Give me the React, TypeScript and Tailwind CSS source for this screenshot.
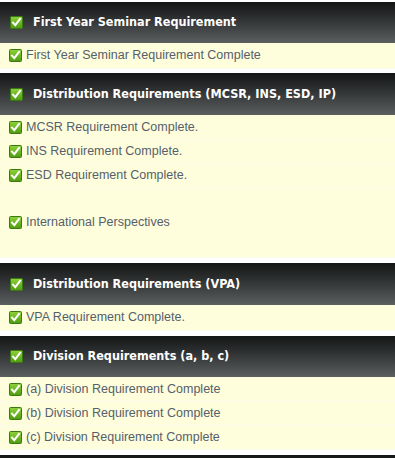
import React from "react";

function Check() {
  return (
    <svg width="13" height="13" viewBox="0 0 13 13" className="shrink-0">
      <defs>
        <linearGradient id="cg" x1="0" y1="0" x2="0" y2="1">
          <stop offset="0" stopColor="#8fd23a" />
          <stop offset="1" stopColor="#4e9a12" />
        </linearGradient>
      </defs>
      <rect x="0.5" y="0.5" width="12" height="12" rx="1" fill="url(#cg)" stroke="#3b7a10" />
      <path d="M3 6.6 L5.3 9.2 L10 3" fill="none" stroke="#fff" strokeWidth="2" strokeLinecap="square" />
    </svg>
  );
}

function Header({ title, h }: { title: string; h: string }) {
  return (
    <div className={`flex items-center bg-gradient-to-b from-[#141616] to-[#5c5f60] pl-[10px] ${h}`}>
      <Check />
      <span
        className="ml-[10px] text-[12.5px] font-bold text-white"
        style={{ fontFamily: '"DejaVu Sans Condensed", "DejaVu Sans", Verdana, sans-serif', fontStretch: "condensed" }}
      >
        {title}
      </span>
    </div>
  );
}

function Row({ text, h }: { text: string; h: string }) {
  return (
    <div className={`flex items-center border-b border-[#fbfbee] bg-[#fefedd] pl-[9px] ${h}`}>
      <Check />
      <span
        className="ml-[4px] text-[12.5px] text-[#56606a]"
        style={{ fontFamily: '"Liberation Sans", Arial, sans-serif' }}
      >
        {text}
      </span>
    </div>
  );
}

export default function App() {
  return (
    <div className="h-[458px] w-[395px] overflow-hidden bg-white pt-[2px]">
      <Header title="First Year Seminar Requirement" h="h-[41px]" />
      <Row text="First Year Seminar Requirement Complete" h="h-[26px]" />
      <div className="h-[4px]" />
      <Header title="Distribution Requirements (MCSR, INS, ESD, IP)" h="h-[42px]" />
      <Row text="MCSR Requirement Complete." h="h-[25px]" />
      <Row text="INS Requirement Complete." h="h-[24px]" />
      <Row text="ESD Requirement Complete." h="h-[24px]" />
      <Row text="International Perspectives" h="h-[70px]" />
      <div className="h-[5px]" />
      <Header title="Distribution Requirements (VPA)" h="h-[42px]" />
      <Row text="VPA Requirement Complete." h="h-[26px]" />
      <div className="h-[5px]" />
      <Header title="Division Requirements (a, b, c)" h="h-[41px]" />
      <Row text="(a) Division Requirement Complete" h="h-[25px]" />
      <Row text="(b) Division Requirement Complete" h="h-[24px]" />
      <Row text="(c) Division Requirement Complete" h="h-[24px]" />
      <div className="h-[5px]" />
      <Header title="" h="h-[41px]" />
    </div>
  );
}
